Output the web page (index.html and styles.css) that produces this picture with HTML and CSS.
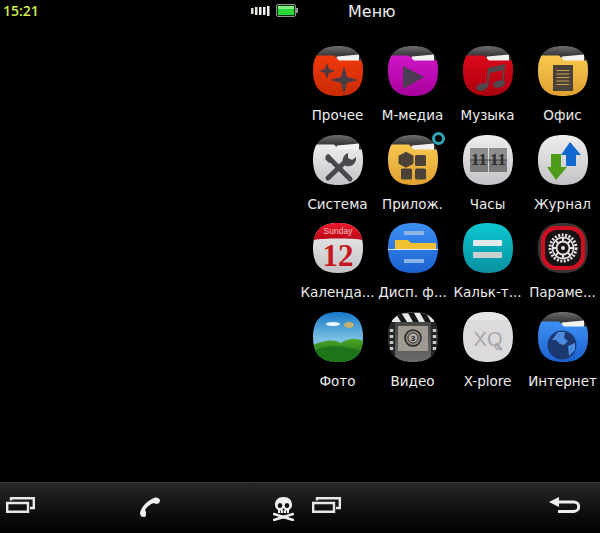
FILE: index.html
```html
<!DOCTYPE html>
<html lang="en">
<head>
    <meta charset="UTF-8">
    <meta name="viewport" content="width=device-width, initial-scale=1.0">
    <title>Меню</title>
    <link rel="stylesheet" href="styles.css">
</head>
<body>
    <!-- shared gradients and folder shapes -->
    <svg class="defs" aria-hidden="true">
        <defs>
            <clipPath id="squircle"><path d="M25 0C42 0 50 8 50 25C50 42 42 50 25 50C8 50 0 42 0 25C0 8 8 0 25 0Z"/></clipPath>
            <linearGradient id="g-orange" x1="0" y1="0" x2="0" y2="1"><stop offset="0" stop-color="#f0380c"/><stop offset="1" stop-color="#c92c04"/></linearGradient>
            <linearGradient id="g-magenta" x1="0" y1="0" x2="0" y2="1"><stop offset="0" stop-color="#d016c8"/><stop offset="1" stop-color="#a8009c"/></linearGradient>
            <linearGradient id="g-red" x1="0" y1="0" x2="0" y2="1"><stop offset="0" stop-color="#dc0818"/><stop offset="1" stop-color="#a80010"/></linearGradient>
            <linearGradient id="g-yellow" x1="0" y1="0" x2="0" y2="1"><stop offset="0" stop-color="#f8c850"/><stop offset="1" stop-color="#e0a030"/></linearGradient>
            <linearGradient id="g-grey" x1="0" y1="0" x2="0" y2="1"><stop offset="0" stop-color="#eeeeee"/><stop offset="1" stop-color="#c4c2c6"/></linearGradient>
            <linearGradient id="g-blue" x1="0" y1="0" x2="0" y2="1"><stop offset="0" stop-color="#3c90f4"/><stop offset="1" stop-color="#1c60d0"/></linearGradient>
            <linearGradient id="g-sky" x1="0" y1="0" x2="0" y2="1"><stop offset="0" stop-color="#1878c8"/><stop offset="0.55" stop-color="#7cc0e4"/></linearGradient>
            <linearGradient id="g-teal" x1="0" y1="0" x2="0" y2="1"><stop offset="0" stop-color="#0cc8d0"/><stop offset="1" stop-color="#0890a0"/></linearGradient>
            <linearGradient id="g-hill" x1="0" y1="0" x2="0" y2="1"><stop offset="0" stop-color="#4ca828"/><stop offset="1" stop-color="#145c14"/></linearGradient>
            <linearGradient id="g-calred" x1="0" y1="0" x2="0" y2="1"><stop offset="0" stop-color="#f01828"/><stop offset="1" stop-color="#b80818"/></linearGradient>
            <linearGradient id="g-film" x1="0" y1="0" x2="0" y2="1"><stop offset="0" stop-color="#3a3a3a"/><stop offset="1" stop-color="#6c6c6c"/></linearGradient>
            <linearGradient id="g-cap" x1="0" y1="0" x2="0" y2="1"><stop offset="0" stop-color="#706e70"/><stop offset="0.4" stop-color="#3c3a3c"/><stop offset="1" stop-color="#2c2a2c"/></linearGradient>
            <g id="folder-back">
                <rect width="50" height="22" fill="url(#g-cap)"/>
                <path d="M22 16L24 10.500L46 8.500V16Z" fill="#f4f2f0"/>
            </g>
            <path id="folder-body" d="M0 9.500H21L26 14.500H50V50H0Z"/>
        </defs>
    </svg>

    <header class="status-bar">
        <div class="status-left">
            <span class="clock">15:21</span>
            <div class="indicators">
                <svg width="20" height="10" viewBox="0 0 20 10">
                    <rect x="0" y="2" width="2.500" height="6" fill="#dfe8d0"/>
                    <rect x="4" y="1" width="2.500" height="8" fill="#e8eee0"/>
                    <rect x="8" y="1" width="2.500" height="8" fill="#f0f0f0"/>
                    <rect x="12" y="1" width="2.500" height="8" fill="#f0f0f0"/>
                    <rect x="16" y="0" width="2.500" height="10" fill="#f0f0f0"/>
                </svg>
                <svg width="22" height="13" viewBox="0 0 22 13">
                    <rect x="0.500" y="0.500" width="19" height="12" rx="1.500" fill="#0c2a0c" stroke="#8a9a8a"/>
                    <rect x="2" y="2" width="16" height="9" fill="#28d838"/>
                    <rect x="2" y="2" width="16" height="3" fill="#80f080"/>
                    <rect x="20" y="4" width="2" height="5" fill="#8a9a8a"/>
                </svg>
            </div>
        </div>
        <h1 class="screen-title">Меню</h1>
    </header>

    <main class="content">
        <div class="app-grid">
            <div class="app">
                <svg class="app-icon" viewBox="0 0 50 50"><g clip-path="url(#squircle)">
                    <use href="#folder-back"/><use href="#folder-body" fill="url(#g-orange)"/>
                    <path d="M14 17L16 23L22 25L16 27L14 33L12 27L6 25L12 23Z" fill="#4a3a44"/>
                    <path d="M31 22L34 33L45 36L34 39L31 50L28 39L17 36L28 33Z" fill="#4a3a44" transform="translate(0 -2)"/>
                </g></svg>
                <span class="app-label">Прочее</span>
            </div>
            <div class="app">
                <svg class="app-icon" viewBox="0 0 50 50"><g clip-path="url(#squircle)">
                    <use href="#folder-back"/><use href="#folder-body" fill="url(#g-magenta)"/>
                    <path d="M15 20L36 31L15 43Z" fill="#4c3c54"/>
                </g></svg>
                <span class="app-label">М-медиа</span>
            </div>
            <div class="app">
                <svg class="app-icon" viewBox="0 0 50 50"><g clip-path="url(#squircle)">
                    <use href="#folder-back"/><use href="#folder-body" fill="url(#g-red)"/>
                    <ellipse cx="19" cy="41" rx="6" ry="3.500" fill="#50464c" transform="rotate(-15 19 41)"/>
                    <ellipse cx="36" cy="38" rx="6" ry="3.500" fill="#50464c" transform="rotate(-15 36 38)"/>
                    <path d="M23 41L25 22L42 18L41 38H39L40 24L27 27L25 41Z" fill="#50464c"/>
                </g></svg>
                <span class="app-label">Музыка</span>
            </div>
            <div class="app">
                <svg class="app-icon" viewBox="0 0 50 50"><g clip-path="url(#squircle)">
                    <use href="#folder-back"/><use href="#folder-body" fill="url(#g-yellow)"/>
                    <rect x="15" y="19" width="20" height="26" fill="#4a4238"/>
                    <path d="M18.500 24.500H31.500M18.500 28H31.500M18.500 31.500H31.500M18.500 35H31.500M18.500 38.500H31.500" stroke="#c8a050" stroke-width="1.200"/>
                </g></svg>
                <span class="app-label">Офис</span>
            </div>

            <div class="app">
                <svg class="app-icon" viewBox="0 0 50 50"><g clip-path="url(#squircle)">
                    <use href="#folder-back"/><use href="#folder-body" fill="url(#g-grey)"/>
                    <g transform="translate(0 2)">
                        <path d="M15 20L37 42" stroke="#4a484c" stroke-width="5" stroke-linecap="round"/>
                        <path d="M12 22L16 17L20 23L16 26Z" fill="#4a484c"/>
                        <path d="M15 41L32 25" stroke="#4a484c" stroke-width="5" stroke-linecap="round"/>
                        <path d="M30 26A8 8 0 0 1 35 16L35 21L39 23L43 20A8 8 0 0 1 33 29Z" fill="#4a484c"/>
                    </g>
                </g></svg>
                <span class="app-label">Система</span>
            </div>
            <div class="app app-busy">
                <svg class="app-icon" viewBox="0 0 50 50"><g clip-path="url(#squircle)">
                    <use href="#folder-back"/><use href="#folder-body" fill="url(#g-yellow)"/>
                    <path d="M18 18L24.500 21.500V28L18 31.500L11.500 28V21.500Z" fill="#4a4238" stroke="#4a4238" stroke-width="2" stroke-linejoin="round"/>
                    <rect x="27" y="20" width="11" height="11" rx="1.500" fill="#4a4238"/>
                    <rect x="13" y="33.500" width="11" height="11" rx="1.500" fill="#4a4238"/>
                    <rect x="27" y="33.500" width="11" height="11" rx="1.500" fill="#4a4238"/>
                </g></svg>
                <span class="busy-ring"></span>
                <span class="app-label">Прилож.</span>
            </div>
            <div class="app">
                <svg class="app-icon" viewBox="0 0 50 50"><g clip-path="url(#squircle)">
                    <rect width="50" height="50" fill="url(#g-grey)"/>
                    <rect x="7" y="13" width="18" height="24" fill="#7a7a7c"/>
                    <rect x="26" y="13" width="18" height="24" fill="#7a7a7c"/>
                    <rect x="7" y="13" width="18" height="12" fill="#8e8e90"/>
                    <rect x="26" y="13" width="18" height="12" fill="#8e8e90"/>
                    <text x="16" y="30" class="clock-digits">11</text>
                    <text x="35" y="30" class="clock-digits">11</text>
                    <path d="M7 25H44" stroke="#333" stroke-width="0.800"/>
                </g></svg>
                <span class="app-label">Часы</span>
            </div>
            <div class="app">
                <svg class="app-icon" viewBox="0 0 50 50"><g clip-path="url(#squircle)">
                    <rect width="50" height="50" fill="url(#g-grey)"/>
                    <path d="M14 20H24V33H30L19 46L10 33H14Z" fill="#4c9c18" transform="translate(-1 -1)"/>
                    <path d="M32 6L43 19H38V30H28V19H23Z" fill="#1068d0" transform="translate(0 1)"/>
                </g></svg>
                <span class="app-label">Журнал</span>
            </div>

            <div class="app">
                <svg class="app-icon" viewBox="0 0 50 50"><g clip-path="url(#squircle)">
                    <rect width="50" height="50" fill="url(#g-grey)"/>
                    <path d="M0 0H50V17C40 15 10 15 0 17Z" fill="url(#g-calred)"/>
                    <text x="25" y="10.500" class="cal-day">Sunday</text>
                    <text x="25" y="43" class="cal-date">12</text>
                </g></svg>
                <span class="app-label">Календа...</span>
            </div>
            <div class="app">
                <svg class="app-icon" viewBox="0 0 50 50"><g clip-path="url(#squircle)">
                    <rect width="50" height="50" fill="url(#g-blue)"/>
                    <path d="M16 8H36V12H16ZM16 36H36V40H16Z" fill="#8cb4e4"/>
                    <path d="M7 17H20L23 20H48V26H7Z" fill="#f0c030"/>
                    <path d="M0 26.500H50" stroke="#d8ecfc" stroke-width="1"/>
                </g></svg>
                <span class="app-label">Дисп. ф...</span>
            </div>
            <div class="app">
                <svg class="app-icon" viewBox="0 0 50 50"><g clip-path="url(#squircle)">
                    <rect width="50" height="50" fill="url(#g-teal)"/>
                    <rect x="10" y="17" width="29" height="6" rx="1" fill="#e4eaec"/>
                    <rect x="10" y="29" width="29" height="6" rx="1" fill="#c8d0d2"/>
                </g></svg>
                <span class="app-label">Кальк-т...</span>
            </div>
            <div class="app">
                <svg class="app-icon" viewBox="0 0 50 50"><g clip-path="url(#squircle)">
                    <rect width="50" height="50" fill="#3a3436"/>
                    <rect x="3" y="3" width="44" height="44" rx="15" fill="#d01020"/>
                    <rect x="7" y="7" width="36" height="36" rx="12" fill="#181214"/>
                    <circle cx="25" cy="25" r="13" fill="none" stroke="#e4e0e0" stroke-width="3" stroke-dasharray="2 1.500"/>
                    <circle cx="25" cy="25" r="10.500" fill="none" stroke="#e4e0e0" stroke-width="1.500"/>
                    <path d="M25 14V36M14 25H36M17.500 17.500L32.500 32.500M32.500 17.500L17.500 32.500" stroke="#e4e0e0" stroke-width="2"/>
                    <circle cx="25" cy="25" r="6.500" fill="#181214" stroke="#e4e0e0" stroke-width="2"/>
                    <circle cx="25" cy="25" r="2" fill="#e4e0e0"/>
                </g></svg>
                <span class="app-label">Параме...</span>
            </div>

            <div class="app">
                <svg class="app-icon" viewBox="0 0 50 50"><g clip-path="url(#squircle)">
                    <rect width="50" height="50" fill="url(#g-sky)"/>
                    <ellipse cx="20" cy="12" rx="7" ry="2" fill="#e8f4fc"/>
                    <ellipse cx="36" cy="13" rx="5" ry="3" fill="#c8b070"/>
                    <path d="M0 33C12 28 20 27 28 31C34 27 42 25 50 29V50H0Z" fill="url(#g-hill)"/>
                    <path d="M0 40C14 32 30 33 50 40V50H0Z" fill="#1e7418"/>
                </g></svg>
                <span class="app-label">Фото</span>
            </div>
            <div class="app">
                <svg class="app-icon" viewBox="0 0 50 50"><g clip-path="url(#squircle)">
                    <rect width="50" height="50" fill="url(#g-film)"/>
                    <path d="M4 2L46 0V10H4Z" fill="#e8e8e8"/>
                    <path d="M8 2H14L19 10H13ZM20 1H26L31 10H25ZM32 1H38L43 10H37Z" fill="#161616"/>
                    <rect x="0" y="10" width="7" height="40" fill="#262626"/>
                    <rect x="43" y="10" width="7" height="40" fill="#262626"/>
                    <path d="M3.500 17V40M46.500 17V40" stroke="#c8c8c8" stroke-width="3.500" stroke-dasharray="3 3"/>
                    <rect x="10" y="14" width="30" height="25" fill="#a09a92"/>
                    <circle cx="25" cy="26" r="8" fill="#8a8680" stroke="#222" stroke-width="1.500"/>
                    <circle cx="25" cy="26" r="5" fill="#b0aca4" stroke="#333"/>
                    <text x="25" y="29" class="film-count">3</text>
                </g></svg>
                <span class="app-label">Видео</span>
            </div>
            <div class="app">
                <svg class="app-icon" viewBox="0 0 50 50"><g clip-path="url(#squircle)">
                    <rect width="50" height="50" fill="#dcdadc"/>
                    <path d="M0 0H50V8H0Z" fill="#e6e4e6"/>
                    <text x="25" y="34" class="xplore-mark">XQ</text>
                    <path d="M33 31L39 38" stroke="#aaa8aa" stroke-width="2.500"/>
                </g></svg>
                <span class="app-label">X-plore</span>
            </div>
            <div class="app">
                <svg class="app-icon" viewBox="0 0 50 50"><g clip-path="url(#squircle)">
                    <use href="#folder-back"/><use href="#folder-body" fill="url(#g-blue)"/>
                    <circle cx="24" cy="33" r="14.500" fill="#1c3870"/>
                    <path d="M20 20L27 20L26 26L30 29L26 33L22 32L18 28L14 28ZM30 34L37 31L37 38L31 44Z" fill="#4c8ce0"/>
                </g></svg>
                <span class="app-label">Интернет</span>
            </div>
        </div>
    </main>

    <footer class="softkeys">
        <div class="softkeys-half softkeys-left">
            <svg width="29" height="16" viewBox="0 0 29 16"><path d="M1.200 6H22V14.800H1.200ZM5 3.500V1.200H27.800V11H24" fill="none" stroke="#e8e8e8" stroke-width="2.400"/></svg>
            <svg class="key-phone" width="20" height="20" viewBox="0 0 20 20"><path d="M20 3C19 1 16 0 14 1C7 4 1 10 0 16C0 19 2 20 4 20C6 20 6 18 6 15L5 13C7 10 10 7 14 6L16 7C18 7 20 6 20 3Z" fill="#f0f0f0"/></svg>
            <svg width="21" height="24" viewBox="0 0 21 24">
                <path d="M10.500 0C16 0 19 3 19 8C19 11 17 12 16 13V16H5V13C4 12 2 11 2 8C2 3 5 0 10.500 0Z" fill="#efefef"/>
                <ellipse cx="7" cy="8.500" rx="2.300" ry="2.500" fill="#111"/>
                <ellipse cx="14" cy="8.500" rx="2.300" ry="2.500" fill="#111"/>
                <path d="M10.500 11L9 13.500H12Z" fill="#111"/>
                <path d="M7.500 13.500V16M10.500 14V16M13.500 13.500V16" stroke="#111" stroke-width="0.800"/>
                <path d="M1 17L20 23M20 17L1 23" stroke="#efefef" stroke-width="2.500" stroke-linecap="round"/>
            </svg>
        </div>
        <div class="softkeys-half softkeys-right">
            <svg width="29" height="16" viewBox="0 0 29 16"><path d="M1.200 6H22V14.800H1.200ZM5 3.500V1.200H27.800V11H24" fill="none" stroke="#e8e8e8" stroke-width="2.400"/></svg>
            <svg width="31" height="16" viewBox="0 0 31 16"><path d="M10 0V10L0 5Z" fill="#f0f0f0"/><path d="M8 5H25A4.700 4.700 0 0 1 25 14.400H9" fill="none" stroke="#f0f0f0" stroke-width="3"/></svg>
        </div>
    </footer>
</body>
</html>
```

FILE: styles.css
```css
html, body {
    margin: 0;
    padding: 0;
}
body {
    width: 600px;
    height: 533px;
    background-color: #000;
    color: #ececec;
    font-family: "DejaVu Sans", sans-serif;
    display: flex;
    flex-direction: column;
    overflow: hidden;
}
.defs {
    display: block;
    width: 0;
    height: 0;
}
.status-bar {
    height: 24px;
    display: grid;
    grid-template-columns: 300px 300px;
}
.status-left {
    display: flex;
    align-items: center;
    justify-content: space-between;
    padding: 0 2px 3px 3px;
}
.clock {
    color: #cdec50;
    font-size: 14px;
    font-weight: 600;
    font-family: "Open Sans", sans-serif;
}
.indicators {
    display: flex;
    align-items: center;
    gap: 5px;
}
.screen-title {
    margin: 0;
    padding-left: 48px;
    font-size: 16px;
    font-weight: normal;
    line-height: 24px;
}
.content {
    flex: 1;
    padding: 22px 0 0 300px;
}
.app-grid {
    display: grid;
    grid-template-columns: repeat(4, 75px);
    grid-auto-rows: 88.5px;
}
.app {
    position: relative;
    display: flex;
    flex-direction: column;
    align-items: center;
}
.app-icon {
    width: 50px;
    height: 50px;
    flex: none;
}
.app-label {
    margin-top: 11px;
    font-size: 13.500px;
    line-height: 16px;
    white-space: nowrap;
}
.busy-ring {
    position: absolute;
    top: -3px;
    left: 57px;
    width: 7px;
    height: 7px;
    border: 3px solid #2aa8b8;
    border-radius: 50%;
}
.clock-digits {
    font-family: "Liberation Serif", serif;
    font-size: 17px;
    font-weight: bold;
    text-anchor: middle;
    fill: #2e2e2e;
}
.cal-day {
    font-family: "Liberation Sans", sans-serif;
    font-size: 8.500px;
    text-anchor: middle;
    fill: #f4c0c0;
}
.cal-date {
    font-family: "Liberation Serif", serif;
    font-size: 31px;
    font-weight: bold;
    text-anchor: middle;
    fill: #c41820;
}
.film-count {
    font-family: "Liberation Sans", sans-serif;
    font-size: 8px;
    font-weight: bold;
    text-anchor: middle;
    fill: #222;
}
.xplore-mark {
    font-family: "Liberation Sans", sans-serif;
    font-size: 20px;
    text-anchor: middle;
    fill: #aaa8aa;
}
.softkeys {
    height: 51px;
    display: grid;
    grid-template-columns: 300px 300px;
    box-sizing: border-box;
    border-top: 1px solid #3a3a3a;
    background: linear-gradient(#272727, #0a0a0a 70%, #000);
}
.softkeys-half {
    display: flex;
    align-items: flex-start;
    justify-content: space-between;
    padding-top: 14px;
}
.softkeys-left {
    padding-left: 6px;
    padding-right: 6px;
}
.key-phone {
    margin-right: 8px;
}
.softkeys-right {
    padding-left: 12px;
    padding-right: 20px;
}
```
